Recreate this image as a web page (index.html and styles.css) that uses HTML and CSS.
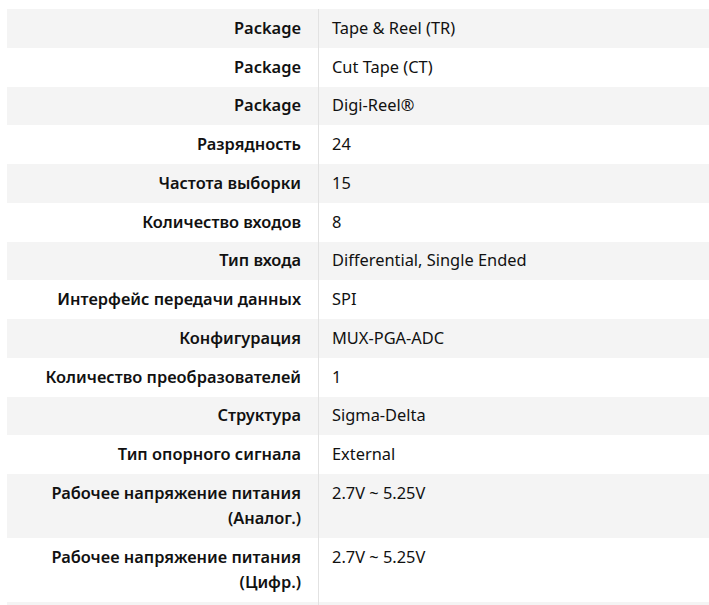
FILE: index.html
```html
<!DOCTYPE html>
<html lang="ru">
<head>
<meta charset="utf-8">
<link rel="stylesheet" href="styles.css">
</head>
<body>
<div class="wrap">
<table class="specs">
<tbody>
<tr><th>Package</th><td>Tape &amp; Reel (TR)</td></tr>
<tr><th>Package</th><td>Cut Tape (CT)</td></tr>
<tr><th>Package</th><td>Digi-Reel®</td></tr>
<tr><th>Разрядность</th><td>24</td></tr>
<tr><th>Частота выборки</th><td>15</td></tr>
<tr><th>Количество входов</th><td>8</td></tr>
<tr><th>Тип входа</th><td>Differential, Single Ended</td></tr>
<tr><th>Интерфейс передачи данных</th><td>SPI</td></tr>
<tr><th>Конфигурация</th><td>MUX-PGA-ADC</td></tr>
<tr><th>Количество преобразователей</th><td>1</td></tr>
<tr><th>Структура</th><td>Sigma-Delta</td></tr>
<tr><th>Тип опорного сигнала</th><td>External</td></tr>
<tr><th>Рабочее напряжение питания (Аналог.)</th><td>2.7V ~ 5.25V</td></tr>
<tr><th>Рабочее напряжение питания (Цифр.)</th><td>2.7V ~ 5.25V</td></tr>
<tr class="tail"><th></th><td></td></tr>
</tbody>
</table>
</div>
</body>
</html>
```

FILE: styles.css
```css
html, body {
  margin: 0;
  padding: 0;
  background: #ffffff;
}
.wrap {
  padding: 9px 0 0 7px;
  overflow: hidden;
}
.specs {
  border-collapse: collapse;
  width: 702px;
  table-layout: fixed;
  font-family: "Noto Sans", "Open Sans", sans-serif;
  font-size: 16.4px;
  line-height: 25.25px;
  color: #111111;
}
.specs tr:nth-child(odd) {
  background: #f4f4f4;
}
.specs th {
  width: 294px;
  text-align: right;
  vertical-align: top;
  font-weight: 600;
  padding: 5.75px 17px 7.75px 0;
  border-right: 1px solid #e2e2e2;
}
.specs td {
  text-align: left;
  vertical-align: top;
  font-weight: 400;
  padding: 5.75px 10px 7.75px 13px;
}
.specs .tail th,
.specs .tail td {
  height: 25.25px;
}
```
